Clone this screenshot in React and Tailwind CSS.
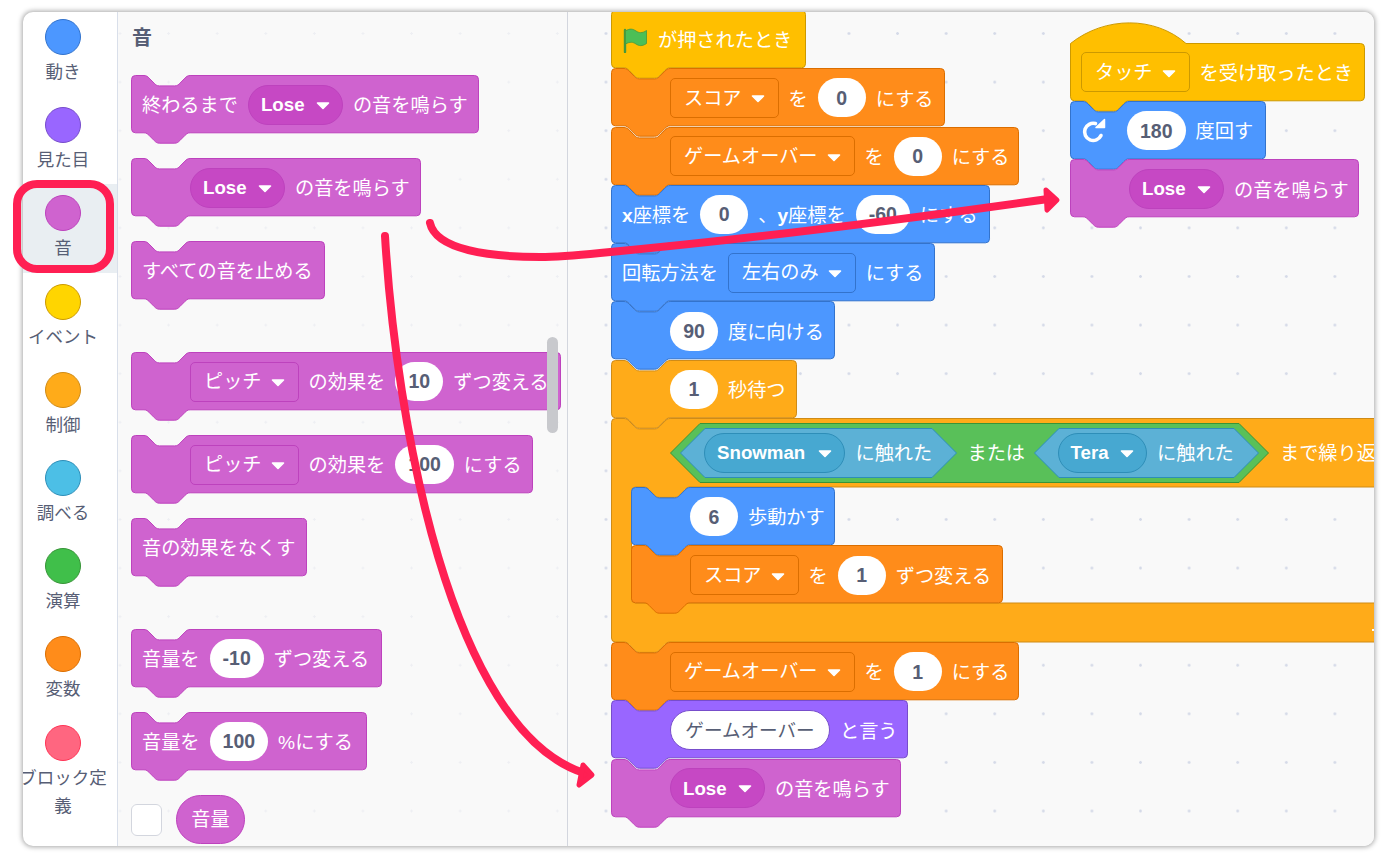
import React from "react";

const C = {
  sound: ["#cf63cf", "#bd42bd"],
  blue: ["#4c97ff", "#3373cc"],
  orange: ["#ff8c1a", "#db6e00"],
  yellow: ["#ffab19", "#cf8b17"],
  event: ["#ffbf00", "#cc9900"],
  purple: ["#9966ff", "#774dcb"],
};

const notch = (x0) =>
  `H ${x0 + 13} c 2.56 0 3.84 1.3 5.12 2.6 l 5.12 5.2 c 1.28 1.3 2.56 2.6 5.12 2.6 h 15.36 c 2.56 0 3.84 -1.3 5.12 -2.6 l 5.12 -5.2 c 1.28 -1.3 2.56 -2.6 5.12 -2.6 `;
const tab = (x0) =>
  `H ${x0 + 59.08} c -2.56 0 -3.84 1.3 -5.12 2.6 l -5.12 5.2 c -1.28 1.3 -2.56 2.6 -5.12 2.6 h -15.36 c -2.56 0 -3.84 -1.3 -5.12 -2.6 l -5.12 -5.2 c -1.28 -1.3 -2.56 -2.6 -5.12 -2.6 `;

function blockPath(w, h, kind) {
  const W = w - 0.5;
  const H = h - 0.5;
  let top = "M 0.5 4.5 A 4 4 0 0 1 4.5 0.5 ";
  if (kind === "stack") top += notch(0);
  if (kind === "hat") top = "M 0.5 0.5 C 35 -27 85 -27 116 0.5 ";
  let bottom = `H ${W - 4} A 4 4 0 0 1 ${W} 4.5 V ${H - 4} A 4 4 0 0 1 ${W - 4} ${H} `;
  bottom += tab(0);
  return `${top}${bottom}H 4.5 A 4 4 0 0 1 0.5 ${H - 4} Z`;
}

function Block({ w, color, kind = "stack", indent, children }) {
  const h = 58.3;
  return (
    <div
      className={`relative flex items-center pt-[5px] text-[19.2px] text-white whitespace-nowrap h-[58.3px] ${indent ? "pl-[59px]" : "pl-[11px]"}`}
      style={{ width: w }}
    >
      <svg className="absolute left-0 top-0 overflow-visible" width={w} height={h}>
        <path d={blockPath(w, h, kind)} fill={color[0]} stroke={color[1]} strokeWidth="1" />
      </svg>
      <span className="relative flex items-center gap-[10px]">{children}</span>
    </div>
  );
}

function Caret() {
  return (
    <svg width="14" height="9" viewBox="0 0 14 9" className="shrink-0">
      <path d="M1.5 2 H12.5 L7 7.5 Z" fill="#fff" stroke="#fff" strokeWidth="1.6" strokeLinejoin="round" />
    </svg>
  );
}

function Num({ children }) {
  return (
    <span className="flex items-center justify-center h-[39px] -mt-[4px] pt-[1px] min-w-[48px] px-[13px] rounded-full bg-white text-[#575e75] font-bold text-[19.5px]">
      {children}
    </span>
  );
}

function TextPill({ children }) {
  return (
    <span className="flex items-center justify-center h-[40px] -mt-[4px] pt-[1px] w-[160px] rounded-full bg-white text-[#575e75] text-[18.6px] border border-[#774dcb]">
      {children}
    </span>
  );
}

function Pill({ color, border, extra = "", children }) {
  return (
    <span className={`flex items-center justify-between gap-[10px] h-[40px] -mt-[4px] pt-[1px] px-[12px] rounded-full border font-bold text-[18.7px] ${color} ${border} ${extra}`}>
      {children}
      <Caret />
    </span>
  );
}

function SoundPill() {
  return (
    <Pill color="bg-[#c648c4]" border="border-[#bd42bd]" extra="w-[95px]">
      Lose
    </Pill>
  );
}

function Drop({ border, children }) {
  return (
    <span className={`flex items-center gap-[9px] h-[40px] -mt-[4px] pt-[2px] px-[13px] rounded-[5px] border ${border}`}>
      {children}
      <Caret />
    </span>
  );
}

function Hex({ w, h, fill, stroke, className, children }) {
  const a = h / 2;
  return (
    <div className={`relative flex items-center shrink-0 ${className}`} style={{ width: w, height: h }}>
      <svg className="absolute left-0 top-0" width={w} height={h}>
        <path
          d={`M 0.5 ${a} L ${a} 0.5 H ${w - a} L ${w - 0.5} ${a} L ${w - a} ${h - 0.5} H ${a} Z`}
          fill={fill}
          stroke={stroke}
        />
      </svg>
      <span className="relative flex items-center gap-[10.5px]">{children}</span>
    </div>
  );
}

function SenseHex({ w, name, pillW }) {
  return (
    <Hex w={w} h={50} fill="#5cb1d6" stroke="#2e8eb8" className="pl-[24px]">
      <span className="flex pt-[4px]">
        <Pill color="bg-[#47a8d1]" border="border-[#2e8eb8]" extra={pillW}>
          {name}
        </Pill>
      </span>
      <span className="pt-[3px]">に触れた</span>
    </Hex>
  );
}

function Flag() {
  return (
    <svg width="26" height="26" viewBox="0 0 26 26" className="shrink-0 -mt-[4px]">
      <path d="M3 3 V25" stroke="#45993d" strokeWidth="2.4" strokeLinecap="round" />
      <path
        d="M3.5 4 C8 1 11 2 14 4 C17 6 20 6.5 24.5 3.5 V16.5 C20 19.5 17 19 14 17 C11 15 8 14.5 3.5 17 Z"
        fill="#4cbf56"
        stroke="#45993d"
        strokeWidth="0.8"
      />
    </svg>
  );
}

function TurnRight() {
  return (
    <svg width="26" height="26" viewBox="0 0 26 26" className="shrink-0 mr-[10px] -mt-[3px]">
      <path d="M14.5 5.6 A 8.6 8.6 0 1 0 20 17.5" fill="none" stroke="#fff" strokeWidth="3.6" strokeLinecap="round" />
      <path d="M15 9.5 H23.5 V1.5 Z" fill="#fff" stroke="#fff" strokeWidth="1.5" strokeLinejoin="round" />
    </svg>
  );
}

function CBlock({ children }) {
  const W = 900;
  const top = 69;
  const arm = 185;
  const H = 224;
  const d =
    `M 0.5 4.5 A 4 4 0 0 1 4.5 0.5 ${notch(0)}H ${W} V ${top} ` +
    `${tab(20)}H 24.5 A 4 4 0 0 0 20.5 ${top + 4} V ${arm - 4} A 4 4 0 0 0 24.5 ${arm} H ${W} V ${H} ` +
    `${tab(0)}H 4.5 A 4 4 0 0 1 0.5 ${H - 4} Z`;
  return (
    <div className="relative w-[900px] h-[224px] text-[19.2px] text-white whitespace-nowrap">
      <svg className="absolute left-0 top-0 overflow-visible" width={W} height={H}>
        <path d={d} fill={C.yellow[0]} stroke={C.yellow[1]} />
        <path d="M 761 211 h 2 l 1 -1 v 3 h -3 Z" fill="#fff" />
      </svg>
      <div className="relative flex items-center gap-[11px] h-[69px] pl-[59px]">{children[0]}</div>
      <div className="relative flex flex-col pl-[20px]">{children[1]}</div>
    </div>
  );
}

const cats = [
  ["動き", "bg-[#4c97ff] border-[#3373cc]"],
  ["見た目", "bg-[#9966ff] border-[#774dcb]"],
  ["音", "bg-[#cf63cf] border-[#bd42bd]", true],
  ["イベント", "bg-[#ffd500] border-[#cc9900]"],
  ["制御", "bg-[#ffab19] border-[#cf8b17]"],
  ["調べる", "bg-[#4cbfe6] border-[#2e8eb8]"],
  ["演算", "bg-[#40bf4a] border-[#389438]"],
  ["変数", "bg-[#ff8c1a] border-[#db6e00]"],
  ["ブロック定義", "bg-[#ff6680] border-[#ff3355]"],
];

const soundDrop = "border-[#bd42bd]";

export default function App() {
  return (
    <div className="relative w-[1386px] h-[858px] overflow-hidden bg-white pl-[23px] pt-[12px] font-['Liberation_Sans','Noto_Sans_CJK_JP',sans-serif]">
      <div className="flex w-[1351px] h-[834px] overflow-hidden rounded-[10px] bg-white shadow-[0_0_5px_1px_rgba(0,0,0,0.35)]">
        {/* category rail */}
        <div className="w-[95px] shrink-0 border-r border-[#d9dfea] -mt-[4px]">
          {cats.map(([label, cls, active]) => (
            <div
              key={label}
              className={`flex flex-col items-center h-[88.2px] pt-[11px] -ml-[14px] w-[108px] text-[#575e75] text-[17.5px] leading-[28px] text-center ${active ? "bg-[#e9eef2]" : ""}`}
            >
              <span className={`block w-[36px] h-[36px] shrink-0 rounded-full border ${cls}`} />
              <span className="block w-[92px] mt-[3px]">{label}</span>
            </div>
          ))}
        </div>

        {/* palette */}
        <div className="relative w-[450px] shrink-0 pl-[13px] border-r border-[#d3d6de] bg-[#f9f9f9] bg-[radial-gradient(circle,#eeeff3_1px,transparent_1.4px)] bg-[size:48.6px_48.6px] bg-[position:-22.3px_-2.8px]">
          <div className="flex items-center h-[51px] pl-[1px] font-bold text-[20px] text-[#575e75]">音</div>
          <div className="flex flex-col gap-[24.7px] mt-[12px]">
            <Block w={348} color={C.sound}>
              終わるまで
              <SoundPill />
              の音を鳴らす
            </Block>
            <Block w={290} color={C.sound} indent>
              <SoundPill />
              の音を鳴らす
            </Block>
            <Block w={194} color={C.sound}>
              すべての音を止める
            </Block>
            <div className="mt-[28px]">
              <Block w={430} color={C.sound} indent>
                <Drop border={soundDrop}>ピッチ</Drop>
                の効果を
                <Num>10</Num>
                ずつ変える
              </Block>
            </div>
            <Block w={402} color={C.sound} indent>
              <Drop border={soundDrop}>ピッチ</Drop>
              の効果を
              <Num>100</Num>
              にする
            </Block>
            <Block w={176} color={C.sound}>
              音の効果をなくす
            </Block>
            <div className="mt-[28px]">
              <Block w={251} color={C.sound}>
                音量を
                <Num>-10</Num>
                ずつ変える
              </Block>
            </div>
            <Block w={236} color={C.sound}>
              音量を
              <Num>100</Num>
              %にする
            </Block>
          </div>
          <div className="flex items-center gap-[14px] mt-[25px]">
            <span className="block w-[31px] h-[32px] rounded-[6px] bg-white border border-[#d3d6de]" />
            <span className="flex items-center justify-center w-[69px] h-[49px] pt-[2px] rounded-full bg-[#cf63cf] border border-[#bd42bd] text-white text-[19.2px]">
              音量
            </span>
          </div>
          <div className="absolute left-[429px] top-[325px] w-[11px] h-[96px] rounded-full bg-[#c8c9cd]" />
        </div>

        {/* workspace */}
        <div className="relative flex-1 overflow-hidden bg-[#f9f9f9] bg-[radial-gradient(circle,#d5dae8_1.1px,transparent_1.6px)] bg-[size:48.6px_48.6px] bg-[position:13.7px_-2.8px]">
          <div className="absolute left-[43px] -top-[2px] flex flex-col">
            <Block w={195} color={C.event} kind="flat">
              <Flag />
              が押されたとき
            </Block>
            <Block w={334} color={C.orange} indent>
              <Drop border="border-[#db6e00]">スコア</Drop>を<Num>0</Num>にする
            </Block>
            <Block w={408} color={C.orange} indent>
              <Drop border="border-[#db6e00]">ゲームオーバー</Drop>を<Num>0</Num>にする
            </Block>
            <Block w={379} color={C.blue}>
              <span>
                <b>x</b>座標を
              </span>
              <Num>0</Num>
              <span>
                、<b>y</b>座標を
              </span>
              <Num>-60</Num>
              にする
            </Block>
            <Block w={324} color={C.blue}>
              回転方法を
              <Drop border="border-[#3373cc]">左右のみ</Drop>
              にする
            </Block>
            <Block w={224} color={C.blue} indent>
              <Num>90</Num>
              度に向ける
            </Block>
            <Block w={186} color={C.yellow} indent>
              <Num>1</Num>
              秒待つ
            </Block>
            <CBlock>
              {[
                <React.Fragment key="head">
                  <Hex w={599} h={60} fill="#59c059" stroke="#389438" className="pl-[10px]">
                    <SenseHex w={277} name="Snowman" pillW="w-[141px]" />
                    <span className="-mr-[2px] pt-[3px]">または</span>
                    <SenseHex w={225} name="Tera" pillW="w-[89px]" />
                  </Hex>
                  <span className="pt-[3px]">まで繰り返す</span>
                </React.Fragment>,
                <React.Fragment key="body">
                  <Block w={204} color={C.blue} indent>
                    <Num>6</Num>
                    歩動かす
                  </Block>
                  <Block w={372} color={C.orange} indent>
                    <Drop border="border-[#db6e00]">スコア</Drop>を<Num>1</Num>ずつ変える
                  </Block>
                </React.Fragment>,
              ]}
            </CBlock>
            <Block w={408} color={C.orange} indent>
              <Drop border="border-[#db6e00]">ゲームオーバー</Drop>を<Num>1</Num>にする
            </Block>
            <Block w={297} color={C.purple} indent>
              <TextPill>ゲームオーバー</TextPill>
              と言う
            </Block>
            <Block w={290} color={C.sound} indent>
              <SoundPill />
              の音を鳴らす
            </Block>
          </div>

          <div className="absolute left-[502px] top-[30.7px] flex flex-col">
            <Block w={295} color={C.event} kind="hat">
              <Drop border="border-[#cc9900]">タッチ</Drop>
              を受け取ったとき
            </Block>
            <Block w={196} color={C.blue}>
              <TurnRight />
              <Num>180</Num>
              度回す
            </Block>
            <Block w={289} color={C.sound} indent>
              <SoundPill />
              の音を鳴らす
            </Block>
          </div>
        </div>
      </div>

      {/* annotations */}
      <div className="absolute left-[13px] top-[180px] w-[101px] h-[93px] rounded-[24px] border-[8px] border-[#ff1f53]" />
      <svg className="absolute left-0 top-0 pointer-events-none" width="1386" height="858">
        <g fill="none" stroke="#ff1f53" strokeWidth="8" strokeLinecap="round">
          <path d="M 430 223 C 436 250 490 257 540 257 C 560 257 580 255 600 253 C 740 240 900 220 1048 199" />
          <path d="M 385 236 C 396 420 450 730 584 773" />
        </g>
        <path d="M 1046 190 L 1057 200 L 1047 210 Z" fill="#ff1f53" stroke="#ff1f53" strokeWidth="5" strokeLinejoin="round" />
        <path d="M 583 765 L 592 775 L 579 785 Z" fill="#ff1f53" stroke="#ff1f53" strokeWidth="5" strokeLinejoin="round" />
      </svg>
    </div>
  );
}
